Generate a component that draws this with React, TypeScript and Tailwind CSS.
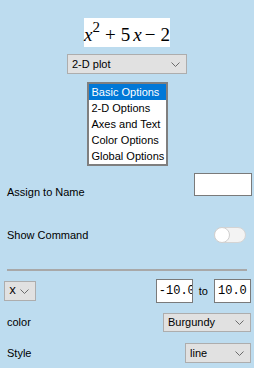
import React from "react";

const Chevron = () => (
  <svg width="9" height="5" viewBox="0 0 9 5" className="shrink-0">
    <path d="M0.5 0.5 L4.5 4.5 L8.5 0.5" fill="none" stroke="#6b6b6b" strokeWidth="1" />
  </svg>
);

function Select({ label, className, mono }: { label: string; className: string; mono?: boolean }) {
  return (
    <div
      className={`flex items-center justify-between border border-[#adadad] bg-[#e1e1e1] pl-[4px] pr-[6px] text-[11px] text-black ${className}`}
      style={mono ? { fontFamily: '"Liberation Mono", monospace', fontSize: "12px" } : undefined}
    >
      <span>{label}</span>
      <Chevron />
    </div>
  );
}

export default function App() {
  const items = ["Basic Options", "2-D Options", "Axes and Text", "Color Options", "Global Options"];
  return (
    <div className="w-[254px] h-[368px] bg-[#bddcef] overflow-hidden flex flex-col font-['Liberation_Sans',sans-serif] text-[11px] text-black">
      <div className="flex justify-center pt-[18px]">
        <div className="w-[86px] h-[29px] bg-white flex items-end justify-center pb-[3px] font-['Liberation_Serif',serif] text-[19px] leading-none">
          <span className="italic">x</span>
          <span className="text-[15px] mb-[9px] mr-[5px]">2</span>
          <span className="mr-[5px]">+</span>
          <span>5</span>
          <span className="italic ml-[3px] mr-[3px]">x</span>
          <span className="mr-[5px]">−</span>
          <span>2</span>
        </div>
      </div>
      <div className="flex justify-center mt-[7px]">
        <Select label="2-D plot" className="w-[120px] h-[20px]" />
      </div>
      <div className="flex justify-center mt-[8px]">
        <div className="w-[81px] border-2 border-[#7f7f7f] bg-white flex flex-col">
          {items.map((it, i) => (
            <div
              key={it}
              className={`h-[16px] leading-[16px] pl-[3px] whitespace-nowrap ${i === 0 ? "bg-[#0078d7] text-white" : ""}`}
            >
              {it}
            </div>
          ))}
        </div>
      </div>
      <div className="flex items-center justify-between mt-[7px] h-[23px] pl-[7px] pr-[2px]">
        <span className="mt-[16px]">Assign to Name</span>
        <div className="w-[58px] h-[23px] bg-white border border-[#7a7a7a]" />
      </div>
      <div className="flex items-center justify-between mt-[31px] h-[16px] pl-[7px] pr-[8px]">
        <span>Show Command</span>
        <div className="relative w-[32px] h-[16px] rounded-full bg-[#f3f3f3] border border-[#d4d4d4]">
          <div className="absolute left-[-1px] top-[-1px] w-[16px] h-[16px] rounded-full bg-white border border-[#cfcfcf]" />
        </div>
      </div>
      <div className="mx-[7px] mt-[26px] h-[2px] bg-[#a8a8a8]" />
      <div className="flex items-center justify-between mt-[8px] h-[24px] pl-[4px] pr-[3px]">
        <Select label="x" mono className="w-[32px] h-[20px]" />
        <div className="flex items-center">
          <div className="w-[37px] h-[24px] bg-white border border-[#7a7a7a] overflow-hidden pl-[2px] font-['Liberation_Mono',monospace] text-[12px] leading-[22px] whitespace-nowrap">
            -10.0
          </div>
          <span className="mx-[6px]">to</span>
          <div className="w-[37px] h-[24px] bg-white border border-[#7a7a7a] overflow-hidden pl-[3px] font-['Liberation_Mono',monospace] text-[12px] leading-[22px] whitespace-nowrap">
            10.0
          </div>
        </div>
      </div>
      <div className="flex items-center justify-between mt-[10px] h-[19px] pl-[7px] pr-[3px]">
        <span>color</span>
        <Select label="Burgundy" className="w-[88px] h-[19px]" />
      </div>
      <div className="flex items-center justify-between mt-[11px] h-[20px] pl-[7px] pr-[3px]">
        <span>Style</span>
        <Select label="line" className="w-[66px] h-[20px]" />
      </div>
    </div>
  );
}
